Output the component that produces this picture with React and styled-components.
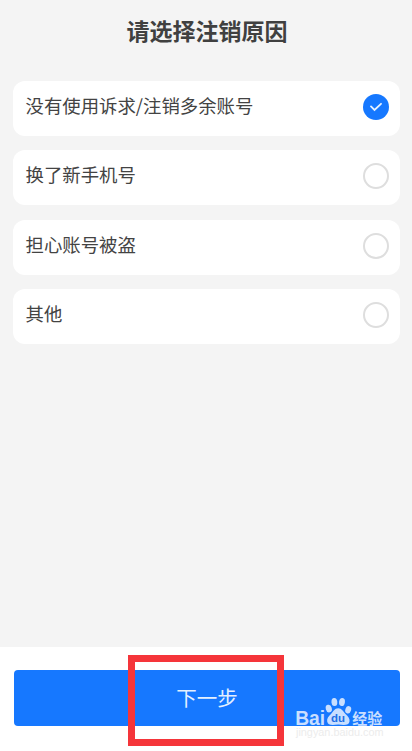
import React, { useState } from "react";
import styled, { createGlobalStyle } from "styled-components";

const GlobalStyle = createGlobalStyle`
  * {
    box-sizing: border-box;
  }

  body {
    margin: 0;
    background: #f4f4f4;
    font-family: "Noto Sans CJK SC", sans-serif;
  }
`;

const Page = styled.div`
  position: relative;
  display: flex;
  flex-direction: column;
  width: 412px;
  height: 751px;
  overflow: hidden;
  background: #f4f4f4;
`;

const Title = styled.h1`
  margin: 0;
  padding-top: 13px;
  height: 81px;
  font-size: 23px;
  font-weight: 700;
  line-height: 34px;
  text-align: center;
  text-indent: 2px;
  color: #404040;
`;

const List = styled.div`
  display: flex;
  flex-direction: column;
  flex-grow: 1;
  gap: 14.4px;
  padding: 0 12px 0 13px;
`;

const Option = styled.button`
  display: flex;
  align-items: flex-start;
  justify-content: space-between;
  width: 100%;
  height: 55px;
  padding: 10px 11.5px 0 12.5px;
  border: none;
  border-radius: 12px;
  background: #fff;
  font-family: inherit;
  cursor: pointer;
`;

const Label = styled.span`
  font-size: 18.4px;
  line-height: 28px;
  color: #434343;
`;

const Radio = styled.span`
  display: flex;
  align-items: center;
  justify-content: center;
  width: 26px;
  height: 26px;
  margin-top: 3px;
  border: ${({ $checked }) => ($checked ? "none" : "2px solid #dedede")};
  border-radius: 50%;
  background: ${({ $checked }) => ($checked ? "#1678ff" : "#fff")};
`;

const Footer = styled.div`
  height: 104px;
  padding: 23px 12px 0 14px;
  background: #fff;
`;

const NextBtn = styled.button`
  display: block;
  width: 100%;
  height: 56px;
  padding: 0 0 3px;
  border: none;
  border-radius: 4px;
  background: #1678ff;
  font-family: inherit;
  font-size: 20.5px;
  line-height: 30px;
  color: #e4f0ff;
  cursor: pointer;
`;

const Highlight = styled.div`
  position: absolute;
  left: 128px;
  top: 655px;
  width: 156px;
  height: 91px;
  border: 7px solid #f5353a;
  pointer-events: none;
`;

const Watermark = styled.div`
  position: absolute;
  left: 295px;
  top: 697px;
  width: 92px;
  height: 46px;
  pointer-events: none;
`;

const reasons = ["没有使用诉求/注销多余账号", "换了新手机号", "担心账号被盗", "其他"];

const Check = () => (
  <svg width="12" height="10" viewBox="0 0 12 10" fill="none">
    <path d="M1 4.4L4.5 8L11 1.8" stroke="#e8f2ff" strokeWidth="1.8" strokeLinecap="round" />
  </svg>
);

const BaiduMark = () => (
  <Watermark>
    <svg width="92" height="46" viewBox="0 0 92 46">
      <g fill="#c9dfff">
        <text x="0.2" y="27.5" fontFamily="Liberation Sans, sans-serif" fontSize="19.5" fontWeight="700" textLength="30" lengthAdjust="spacingAndGlyphs">
          Bai
        </text>
        <ellipse cx="33.8" cy="11.6" rx="3" ry="3.9" transform="rotate(-16 33.8 11.6)" />
        <ellipse cx="39.4" cy="5" rx="2.9" ry="4.1" transform="rotate(-5 39.4 5)" />
        <ellipse cx="47" cy="5" rx="2.9" ry="4.1" transform="rotate(8 47 5)" />
        <ellipse cx="53.2" cy="12.8" rx="2.9" ry="3.8" transform="rotate(16 53.2 12.8)" />
        <path d="M43.2 11.3C47 11.3 48 14.5 50.5 17C53 19.5 55 21.5 54.5 24.6C53.8 28.4 50 28.4 43.2 27.6C36.5 28.4 33 28.4 32.2 24.6C31.6 21.5 33.5 19.5 36 17C38.5 14.5 39.4 11.3 43.2 11.3Z" />
        <text x="57.2" y="26.6" fontFamily="Noto Sans CJK SC, sans-serif" fontSize="15" fontWeight="700">
          经验
        </text>
      </g>
      <text x="36" y="24.6" fontFamily="Liberation Sans, sans-serif" fontSize="10.5" fontWeight="700" fill="#1f6fe6" textLength="14" lengthAdjust="spacingAndGlyphs">
        du
      </text>
      <text x="1" y="39.3" fontFamily="Liberation Sans, sans-serif" fontSize="10.5" fill="#ececec" textLength="87.5" lengthAdjust="spacingAndGlyphs">
        jingyan.baidu.com
      </text>
    </svg>
  </Watermark>
);

const App = () => {
  const [selected, setSelected] = useState(0);

  return (
    <>
      <GlobalStyle />
      <Page>
        <Title>请选择注销原因</Title>
        <List>
          {reasons.map((reason, index) => (
            <Option key={reason} onClick={() => setSelected(index)}>
              <Label>{reason}</Label>
              <Radio $checked={selected === index}>{selected === index && <Check />}</Radio>
            </Option>
          ))}
        </List>
        <Footer>
          <NextBtn>下一步</NextBtn>
        </Footer>
        <Highlight />
        <BaiduMark />
      </Page>
    </>
  );
};

export default App;
